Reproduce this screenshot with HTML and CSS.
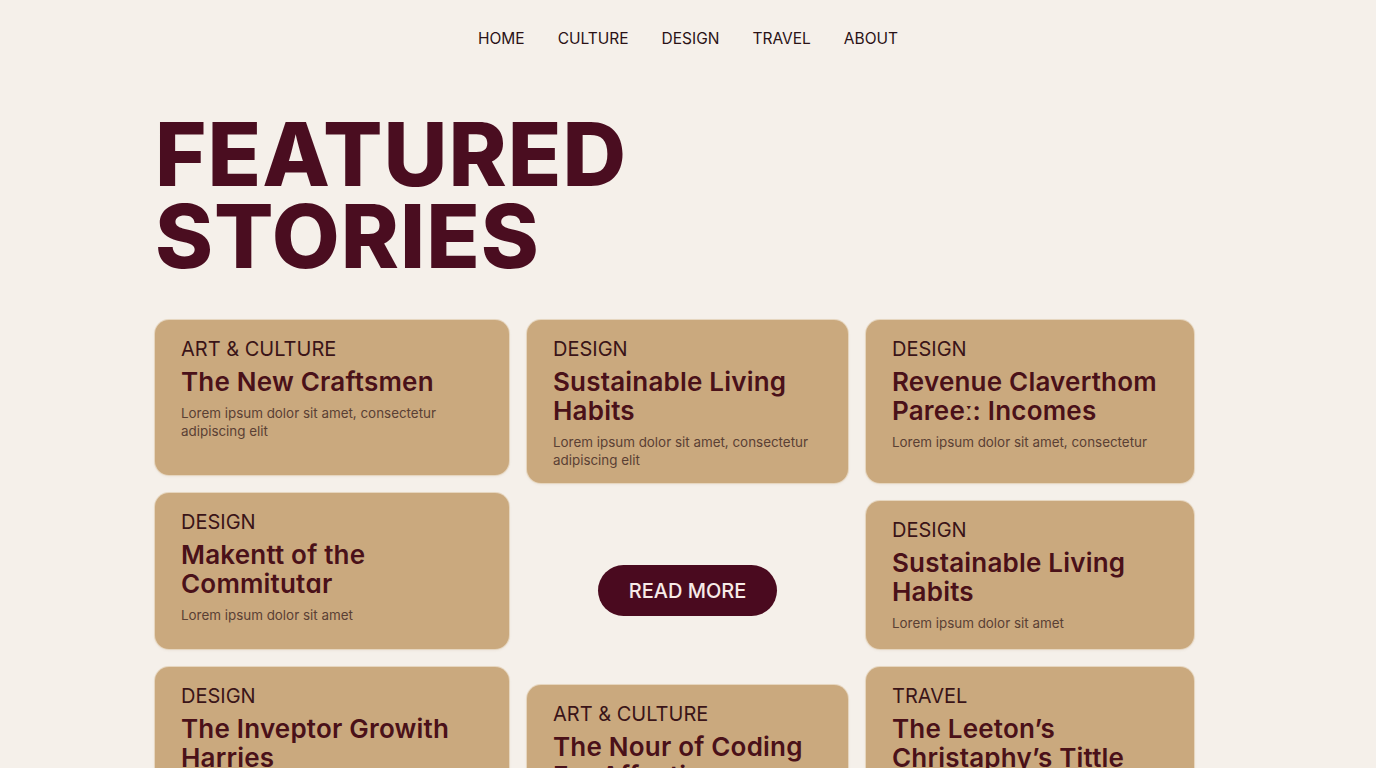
FILE: index.html
```html
<!DOCTYPE html>
<html lang="en">
<head>
<meta charset="utf-8">
<title>Featured Stories</title>
<link rel="stylesheet" href="styles.css">
</head>
<body>
<nav class="nav">
  <a href="#">HOME</a>
  <a href="#">CULTURE</a>
  <a href="#">DESIGN</a>
  <a href="#">TRAVEL</a>
  <a href="#">ABOUT</a>
</nav>
<main class="page">
  <h1 class="headline">FEATURED<br>STORIES</h1>
  <section class="grid">
    <div class="col">
      <article class="card h155">
        <div class="cat">ART &amp; CULTURE</div>
        <h2 class="title">The New Craftsmen</h2>
        <p class="desc">Lorem ipsum dolor sit amet, consectetur adipiscing elit</p>
      </article>
      <article class="card h156">
        <div class="cat">DESIGN</div>
        <h2 class="title">Makentt of the Commitutɑr</h2>
        <p class="desc">Lorem ipsum dolor sit amet</p>
      </article>
      <article class="card h200">
        <div class="cat">DESIGN</div>
        <h2 class="title">The Inveptor Growith Harries</h2>
        <p class="desc">Lorem ipsum dolor sit amet</p>
      </article>
    </div>
    <div class="col">
      <article class="card h163">
        <div class="cat">DESIGN</div>
        <h2 class="title">Sustainable Living Habits</h2>
        <p class="desc">Lorem ipsum dolor sit amet, consectetur adipiscing elit</p>
      </article>
      <div class="more-wrap">
        <a class="more" href="#">READ MORE</a>
      </div>
      <article class="card h200">
        <div class="cat">ART &amp; CULTURE</div>
        <h2 class="title">The Nour of Coding For Affection</h2>
        <p class="desc">Lorem ipsum dolor sit amet</p>
      </article>
    </div>
    <div class="col">
      <article class="card h163">
        <div class="cat">DESIGN</div>
        <h2 class="title">Revenue Claverthom Pareeː: Incomes</h2>
        <p class="desc">Lorem ipsum dolor sit amet, consectetur</p>
      </article>
      <article class="card h148">
        <div class="cat">DESIGN</div>
        <h2 class="title">Sustainable Living Habits</h2>
        <p class="desc">Lorem ipsum dolor sit amet</p>
      </article>
      <article class="card h200">
        <div class="cat">TRAVEL</div>
        <h2 class="title">The Leeton’s Christaphy’s Tittle</h2>
        <p class="desc">Lorem ipsum dolor sit amet</p>
      </article>
    </div>
  </section>
</main>
</body>
</html>
```

FILE: styles.css
```css
* { box-sizing: border-box; }
html, body {
  margin: 0;
  padding: 0;
  height: 100%;
  overflow: hidden;
}
body {
  background: #f5f0ea;
  font-family: Inter, "Noto Sans", "Liberation Sans", sans-serif;
  color: #2b1418;
}
.nav {
  display: flex;
  justify-content: center;
  gap: 33px;
  padding-top: 29px;
  line-height: 20px;
}
.nav a {
  font-size: 15.5px;
  color: #2a1216;
  text-decoration: none;
}
.page {
  padding-left: 155px;
}
.headline {
  margin: 64px 0 0;
  font-size: 88px;
  line-height: 82px;
  font-weight: 800;
  letter-spacing: 1px;
  color: #4a0d20;
}
.grid {
  margin-top: 43px;
  display: grid;
  grid-template-columns: 354px 321px 328px;
  column-gap: 18px;
  align-items: start;
}
.col {
  display: flex;
  flex-direction: column;
  gap: 18px;
}
.card {
  background: #caa97e;
  border-radius: 14px;
  padding: 17px 26px 0;
  box-shadow: 0 0 0 1px #e6d6bf, 0 1px 3px rgba(120, 90, 50, 0.12);
  overflow: hidden;
}
.h148 { height: 148px; }
.h155 { height: 155px; }
.h156 { height: 156px; }
.h163 { height: 163px; }
.h200 { height: 200px; }
.cat {
  font-size: 20px;
  line-height: 25px;
  color: #3a1418;
}
.title {
  margin: 5px 0 0;
  font-size: 26px;
  line-height: 29px;
  font-weight: 600;
  color: #4a1119;
  letter-spacing: 0.2px;
}
.desc {
  margin: 8px 0 0;
  font-size: 13.4px;
  line-height: 18px;
  color: #5a4034;
  max-width: 270px;
}
.more-wrap {
  height: 166px;
  display: flex;
  align-items: center;
  justify-content: center;
  padding-top: 13px;
}
.more {
  display: inline-flex;
  align-items: center;
  justify-content: center;
  width: 179px;
  height: 51px;
  border-radius: 26px;
  background: #4a0a1f;
  color: #f7ebe8;
  font-size: 20px;
  font-weight: 500;
  text-decoration: none;
}
```
